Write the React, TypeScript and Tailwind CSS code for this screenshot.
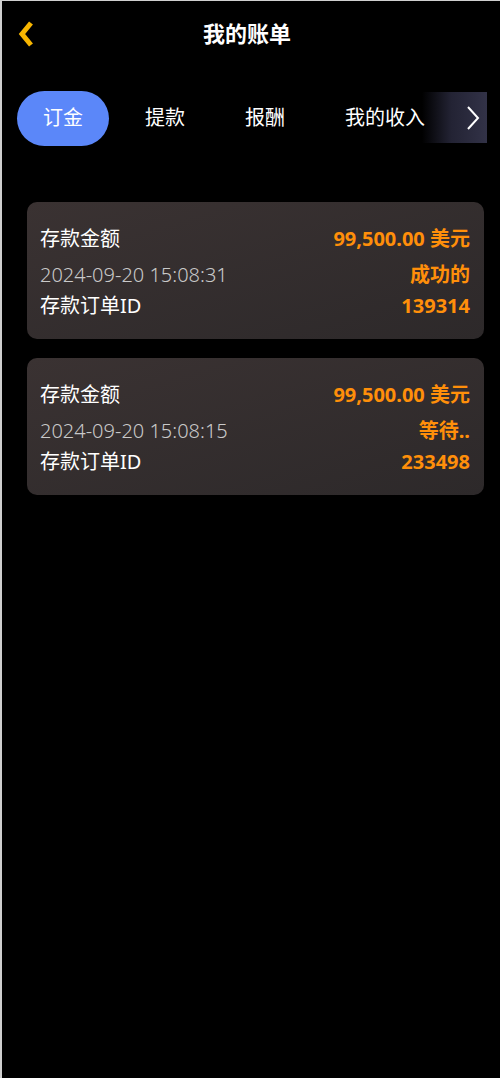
const tabs = ['订金', '提款', '报酬', '我的收入'];

const orders = [
  { amount: '99,500.00 美元', time: '2024-09-20 15:08:31', status: '成功的', id: '139314' },
  { amount: '99,500.00 美元', time: '2024-09-20 15:08:15', status: '等待..', id: '233498' },
];

const OrderCard = ({ amount, time, status, id }: (typeof orders)[number]) => {
  return (
    <div className="flex h-[137px] flex-col justify-center rounded-[10px] bg-gradient-to-br from-[#3a3232] to-[#2d292a] pt-[3px] pr-[14px] pl-[13px] text-[20px]/[28px]">
      <div className="flex h-[28px] items-center justify-between">
        <span className="text-white">存款金额</span>
        <span className="font-bold text-[#ff8f0a]">{amount}</span>
      </div>
      <div className="mt-[8px] flex h-[28px] items-center justify-between">
        <span className="font-light text-[#c9c9c9]">{time}</span>
        <span className="font-bold text-[#ff8f0a]">{status}</span>
      </div>
      <div className="mt-[3px] flex h-[28px] items-center justify-between">
        <span className="text-white">存款订单ID</span>
        <span className="font-bold text-[#ff8f0a]">{id}</span>
      </div>
    </div>
  );
};

export default function App() {
  return (
    <div
      className="flex min-h-[1078px] flex-col border-t border-l-2 border-[#cfcfcf] bg-black"
      style={{ fontFamily: '"Noto Sans", "Noto Sans CJK SC", sans-serif' }}
    >
      <header className="relative flex h-[66px] items-center justify-center pr-[8px] pb-[2px]">
        <button className="absolute top-[20px] left-[16px] text-[#f7b500]">
          <svg width="18" height="26" viewBox="0 0 18 26">
            <path d="M13 2 L4 13 L13 24" fill="none" stroke="currentColor" strokeWidth="5" strokeLinejoin="miter" />
          </svg>
        </button>
        <h1 className="text-[22px] font-bold text-white">我的账单</h1>
      </header>

      <nav className="relative mt-[23px] flex h-[56px] items-center overflow-hidden pl-[15px]">
        <div className="flex items-center">
          {tabs.map((t, i) => (
            <div
              key={t}
              className={
                i === 0
                  ? 'mr-[6px] flex h-[55px] w-[92px] shrink-0 items-center justify-center rounded-full bg-[#5b87f9] text-[20px] text-white'
                  : 'flex h-[55px] shrink-0 items-center justify-center px-[30px] text-[20px] whitespace-nowrap text-white'
              }
            >
              {t}
            </div>
          ))}
        </div>
        <div className="absolute top-[2px] right-[13px] flex h-[51px] w-[65px] items-center justify-end bg-gradient-to-r from-black/0 via-[#232334] via-45% to-[#323247] pr-[6px]">
          <svg width="16" height="26" viewBox="0 0 16 26">
            <path d="M3 2 L13 13 L3 24" fill="none" stroke="white" strokeWidth="2" />
          </svg>
        </div>
      </nav>

      <main className="mt-[56px] flex flex-col gap-[19px] pr-[16px] pl-[25px]">
        {orders.map((o) => (
          <OrderCard key={o.id} {...o} />
        ))}
      </main>
    </div>
  );
}
